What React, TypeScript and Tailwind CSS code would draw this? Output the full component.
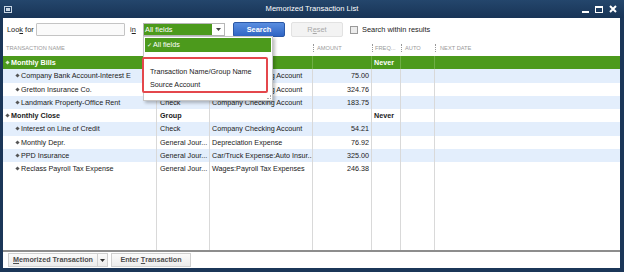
import React from "react";

const COLS = "grid grid-cols-[154px_53px_103px_59px_29px_34px_1fr]";

type Row = {
  kind: "group" | "child";
  name: string;
  type?: string;
  account?: string;
  amount?: string;
  freq?: string;
  bg: "green" | "blue" | "white";
};

const rows: Row[] = [
  { kind: "group", name: "Monthly Bills", type: "Group", freq: "Never", bg: "green" },
  { kind: "child", name: "Company Bank Account-Interest E", type: "Check", account: "Company Checking Account", amount: "75.00", bg: "blue" },
  { kind: "child", name: "Gretton Insurance Co.", type: "Check", account: "Company Checking Account", amount: "324.76", bg: "white" },
  { kind: "child", name: "Landmark Property-Office Rent", type: "Check", account: "Company Checking Account", amount: "183.75", bg: "blue" },
  { kind: "group", name: "Monthly Close", type: "Group", freq: "Never", bg: "white" },
  { kind: "child", name: "Interest on Line of Credit", type: "Check", account: "Company Checking Account", amount: "54.21", bg: "blue" },
  { kind: "child", name: "Monthly Depr.", type: "General Jour...", account: "Depreciation Expense", amount: "76.92", bg: "white" },
  { kind: "child", name: "PPD Insurance", type: "General Jour...", account: "Car/Truck Expense:Auto Insur...", amount: "325.00", bg: "blue" },
  { kind: "child", name: "Reclass Payroll Tax Expense", type: "General Jour...", account: "Wages:Payroll Tax Expenses", amount: "246.38", bg: "white" },
];

function Bullet({ light }: { light?: boolean }) {
  return (
    <span
      className={`inline-block w-[3px] h-[3px] rotate-45 mr-[2px] shrink-0 ${light ? "bg-[#dfeccf]" : "bg-[#555]"}`}
    />
  );
}

function TableRow({ r }: { r: Row }) {
  const green = r.bg === "green";
  const bg = green ? "bg-[#4c9a1c]" : r.bg === "blue" ? "bg-[#e3eefc]" : "bg-white";
  const line = green ? "border-[#6fae45]" : "border-[#d9d9d9]";
  const txt = green ? "text-white" : "text-[#1a1a1a]";
  const bold = r.kind === "group" ? "font-bold" : "";
  return (
    <div className={`${COLS} h-[13.25px] ${bg} ${txt} text-[7.2px] leading-none`}>
      <div className={`flex items-center border-r ${line} ${r.kind === "group" ? "pl-[3px]" : "pl-[13px]"} ${bold} whitespace-nowrap overflow-hidden`}>
        <Bullet light={green} />
        {r.name}
      </div>
      <div className={`flex items-center border-r ${line} pl-[3px] ${bold} whitespace-nowrap overflow-hidden`}>{r.type}</div>
      <div className={`flex items-center border-r ${line} pl-[2px] whitespace-nowrap overflow-hidden`}>{r.account}</div>
      <div className={`flex items-center justify-end border-r ${line} pr-[2px]`}>{r.amount}</div>
      <div className={`flex items-center border-r ${line} pl-[2px] font-bold`}>{r.freq}</div>
      <div className={`border-r ${line}`} />
      <div />
    </div>
  );
}

export default function App() {
  return (
    <div className="w-[624px] h-[272px] bg-[#1b3658] flex flex-col font-['Liberation_Sans',Arial,sans-serif] select-none">
      {/* Title bar */}
      <div className="h-[18px] grid grid-cols-[1fr_auto_1fr] items-center bg-gradient-to-b from-[#24466c] to-[#183456]">
        <div className="pl-[4px] flex items-center">
          <div className="w-[8px] h-[7px] border border-[#c9d6e4] flex items-center justify-center">
            <div className="w-[4px] h-[3px] bg-[#c9d6e4]" />
          </div>
        </div>
        <div className="text-white text-[7.6px] leading-none">Memorized Transaction List</div>
        <div className="flex items-center justify-end gap-[6px] pr-[7px] text-white">
          <div className="w-[7px] h-[2px] bg-white mt-[5px]" />
          <div className="w-[8px] h-[7px] border border-white border-t-[2px]" />
          <svg width="8" height="8" viewBox="0 0 8 8">
            <path d="M1 1 L7 7 M7 1 L1 7" stroke="white" strokeWidth="2" />
          </svg>
        </div>
      </div>

      {/* Body */}
      <div className="relative flex-1 ml-[3px] mr-[4px] mb-[4px] bg-white flex flex-col">
        {/* Toolbar */}
        <div className="h-[23px] flex items-center pl-[4px] text-[7.4px] leading-none text-[#222]">
          <div className="w-[29px]">
            Loo<span className="underline">k</span> for
          </div>
          <div className="w-[89px] h-[13px] border border-[#c4c4c4] bg-[#fafafa] rounded-[1px]" />
          <div className="w-[13px] ml-[5px] text-[#222]">
            i<span className="underline">n</span>
          </div>
          <div className="w-[82px] h-[13px] flex border border-[#b7b7b7] bg-white">
            <div className="flex-1 bg-[#4c9a1c] text-white flex items-center pl-[1px]">All fields</div>
            <div className="w-[12px] flex items-center justify-center">
              <svg width="5" height="3" viewBox="0 0 5 3">
                <path d="M0 0 L5 0 L2.5 3 Z" fill="#444" />
              </svg>
            </div>
          </div>
          <div className="ml-[8px] w-[52px] h-[15px] rounded-[2px] border border-[#2b58a6] bg-gradient-to-b from-[#5a8ee0] to-[#2f65c4] text-white font-bold flex items-center justify-center">
            Search
          </div>
          <div className="ml-[6px] w-[52px] h-[15px] rounded-[2px] border border-[#e2e2e2] bg-[#f3f3f3] text-[#a8a8a8] flex items-center justify-center">
            R<span className="underline">e</span>set
          </div>
          <div className="ml-[7px] w-[8px] h-[8px] border border-[#9a9a9a] bg-[#ececec]" />
          <div className="ml-[4px]">Search within results</div>
        </div>

        {/* Header */}
        <div className={`${COLS} h-[15px] text-[5.7px] leading-none text-[#9a9a9a] uppercase`}>
          <div className="flex items-center pl-[3px]">Transaction Name</div>
          <div />
          <div />
          <div className="flex items-center pl-[4px] relative">
            <span className="absolute left-0 top-[3px] h-[8px] border-l border-dotted border-[#999]" />
            Amount
          </div>
          <div className="flex items-center pl-[3px] relative">
            <span className="absolute left-0 top-[3px] h-[8px] border-l border-dotted border-[#999]" />
            Freq...
          </div>
          <div className="flex items-center pl-[4px] relative">
            <span className="absolute left-0 top-[3px] h-[8px] border-l border-dotted border-[#999]" />
            Auto
          </div>
          <div className="flex items-center pl-[5px] relative">
            <span className="absolute left-0 top-[3px] h-[8px] border-l border-dotted border-[#999]" />
            Next Date
          </div>
        </div>

        {/* Rows */}
        {rows.map((r, i) => (
          <TableRow key={i} r={r} />
        ))}

        {/* Filler */}
        <div className={`${COLS} flex-1`}>
          <div className="border-r border-[#d9d9d9]" />
          <div className="border-r border-[#d9d9d9]" />
          <div className="border-r border-[#d9d9d9]" />
          <div className="border-r border-[#d9d9d9]" />
          <div className="border-r border-[#d9d9d9]" />
          <div className="border-r border-[#d9d9d9]" />
          <div />
        </div>

        {/* Bottom bar */}
        <div className="h-[18px] border-t-2 border-[#8d8d8d] flex items-center pl-[5px] text-[7.2px] leading-none font-bold text-[#4d4d4d]">
          <div className="h-[14px] flex border border-[#d0d0d0] bg-gradient-to-b from-[#fbfbfb] to-[#ececec]">
            <div className="w-[89px] flex items-center justify-center border-r border-[#d0d0d0]">
              <span className="underline">M</span>emorized Transaction
            </div>
            <div className="w-[9px] flex items-center justify-center">
              <svg width="5" height="3" viewBox="0 0 5 3">
                <path d="M0 0 L5 0 L2.5 3 Z" fill="#333" />
              </svg>
            </div>
          </div>
          <div className="ml-[3px] w-[80px] h-[14px] flex items-center justify-center border border-[#d0d0d0] bg-gradient-to-b from-[#fbfbfb] to-[#ececec]">
            Enter <span className="underline ml-[2px]">T</span>ransaction
          </div>
        </div>

        {/* Dropdown popup */}
        <div className="absolute left-[140px] top-[18px] w-[130px] h-[65px] bg-white border border-[#c6c6c6] shadow-[2px_2px_3px_rgba(0,0,0,0.25)] text-[7.2px] leading-none">
          <div className="mx-[1px] mt-[1px] h-[14px] bg-[#4c9a1c] text-white flex items-center pl-[2px]">
            <span className="text-[6px] mr-[1px]">✓</span>All fields
          </div>
          <div className="pl-[6px] pt-[13px] text-[#222]">
            <div className="h-[13px] flex items-center">Transaction Name/Group Name</div>
            <div className="h-[13px] flex items-center">Source Account</div>
          </div>
          <div className="absolute right-[1px] bottom-[1px] w-[4px] h-[4px] border-r border-b border-dotted border-[#aaa]" />
        </div>
        {/* Red highlight */}
        <div className="absolute left-[139px] top-[39px] w-[126px] h-[36px] border-2 border-[#e4474c] rounded-[2px]" />
      </div>
    </div>
  );
}
